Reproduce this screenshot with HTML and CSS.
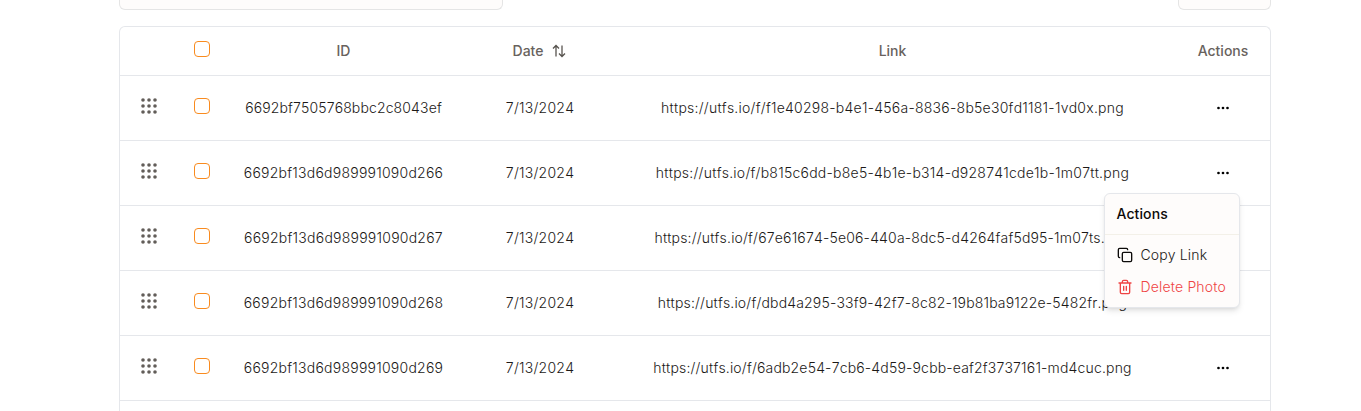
FILE: index.html
```html
<!DOCTYPE html>
<html lang="en">
<head>
<meta charset="utf-8">
<title>Photos</title>
<link rel="stylesheet" href="styles.css">
</head>
<body>
<svg class="sprite" width="0" height="0">
  <symbol id="grip" viewBox="0 0 20 20"><g fill="currentColor"><circle cx="4" cy="4" r="1.8"/><circle cx="10" cy="4" r="1.8"/><circle cx="16" cy="4" r="1.8"/><circle cx="4" cy="10" r="1.8"/><circle cx="10" cy="10" r="1.8"/><circle cx="16" cy="10" r="1.8"/><circle cx="4" cy="16" r="1.8"/><circle cx="10" cy="16" r="1.8"/><circle cx="16" cy="16" r="1.8"/></g></symbol>
  <symbol id="dots" viewBox="0 0 16 16"><g fill="currentColor"><circle cx="3.5" cy="8" r="1.35"/><circle cx="8" cy="8" r="1.35"/><circle cx="12.5" cy="8" r="1.35"/></g></symbol>
</svg>
<main class="page">
  <div class="toolbar"><div class="search"></div><div class="view"></div></div>
  <section class="table">
    <div class="row head"><span></span><i class="check"></i><span>ID</span><span class="sort">Date <svg width="16" height="16" viewBox="0 0 16 16"><path d="M5 13.5V2.5M2 5.5l3-3 3 3M11 2.5v11M8 10.5l3 3 3-3"/></svg></span><span>Link</span><span class="act">Actions</span></div>
    <div class="row"><svg class="grip"><use href="#grip"/></svg><i class="check"></i><span class="snug">6692bf7505768bbc2c8043ef</span><span class="wide">7/13/2024</span><span class="wide">https://utfs.io/f/f1e40298-b4e1-456a-8836-8b5e30fd1181-1vd0x.png</span><span class="act"><svg class="dots"><use href="#dots"/></svg></span></div>
    <div class="row"><svg class="grip"><use href="#grip"/></svg><i class="check"></i><span class="wide">6692bf13d6d989991090d266</span><span class="wide">7/13/2024</span><span class="wide">https://utfs.io/f/b815c6dd-b8e5-4b1e-b314-d928741cde1b-1m07tt.png</span><span class="act"><svg class="dots"><use href="#dots"/></svg>
      <div class="menu">
        <div class="title">Actions</div>
        <div class="item"><svg width="16" height="16" viewBox="0 0 24 24"><rect x="8" y="8" width="14" height="14" rx="2"/><path d="M4 16c-1.1 0-2-.9-2-2V4c0-1.1.9-2 2-2h10c1.1 0 2 .9 2 2"/></svg>Copy Link</div>
        <div class="item danger"><svg width="16" height="16" viewBox="0 0 24 24"><path d="M3 6h18M19 6v14c0 1-1 2-2 2H7c-1 0-2-1-2-2V6M8 6V4c0-1 1-2 2-2h4c1 0 2 1 2 2v2M10 11v6M14 11v6"/></svg>Delete Photo</div>
      </div></span></div>
    <div class="row"><svg class="grip"><use href="#grip"/></svg><i class="check"></i><span class="wide">6692bf13d6d989991090d267</span><span class="wide">7/13/2024</span><span>https://utfs.io/f/67e61674-5e06-440a-8dc5-d4264faf5d95-1m07ts.png</span><span class="act"><svg class="dots"><use href="#dots"/></svg></span></div>
    <div class="row"><svg class="grip"><use href="#grip"/></svg><i class="check"></i><span class="wide">6692bf13d6d989991090d268</span><span class="wide">7/13/2024</span><span>https://utfs.io/f/dbd4a295-33f9-42f7-8c82-19b81ba9122e-5482fr.png</span><span class="act"><svg class="dots"><use href="#dots"/></svg></span></div>
    <div class="row"><svg class="grip"><use href="#grip"/></svg><i class="check"></i><span class="wide">6692bf13d6d989991090d269</span><span class="wide">7/13/2024</span><span>https://utfs.io/f/6adb2e54-7cb6-4d59-9cbb-eaf2f3737161-md4cuc.png</span><span class="act"><svg class="dots"><use href="#dots"/></svg></span></div>
  </section>
</main>
</body>
</html>
```
FILE: styles.css
```css
* { box-sizing: border-box; }
body { margin: 0; background: #fff; color: #1c1917; font: 350 14px/20px Inter, sans-serif; font-kerning: none; letter-spacing: 0.175px; }
.sprite { position: absolute; }
.page { width: 1152px; height: 411px; margin-left: 119px; display: flex; flex-direction: column; }
.toolbar { display: flex; justify-content: space-between; height: 10px; margin-bottom: 16px; }
.search, .view { border: 1px solid #e5e5e5; border-top: 0; border-radius: 0 0 6px 6px; background: #fefcfb; }
.search { width: 384px; }
.view { width: 93px; }
.table { flex: 1; border: 1px solid #e5e7eb; border-bottom: 0; border-radius: 6px 6px 0 0; }
.row { display: grid; grid-template-columns: 58px 48px 235px 158px 547px 104px; align-items: center; justify-items: center; height: 65px; border-bottom: 1px solid #e5e7eb; white-space: nowrap; }
.head { height: 49px; color: #68625d; font-weight: 450; font-kerning: normal; letter-spacing: 0; }
.snug { letter-spacing: 0.13px; }
.wide { letter-spacing: 0.24px; }
.check { width: 16px; height: 16px; border: 1px solid #f98b1f; border-radius: 4px; position: relative; top: -2px; }
.grip { width: 20px; height: 20px; color: #625d59; position: relative; top: -2px; }
.sort { display: flex; align-items: center; gap: 8px; }
.sort svg { fill: none; stroke: #57534e; stroke-width: 1.3; }
.act { position: relative; padding-left: 9px; }
.head .act { padding-left: 10px; }
.dots { display: block; width: 16px; height: 16px; color: #000; }
.menu { position: absolute; z-index: 2; top: 28px; right: -9px; width: 136px; height: 115px; padding: 4px; border: 1px solid #e5e7eb; border-radius: 6px; background: #fefcfb; box-shadow: 0 4px 6px -1px #0000001a, 0 2px 4px -2px #0000001a; font-kerning: normal; }
.title { margin: -4px -4px 4px; height: 41px; padding: 10px 12px; border-bottom: 1px solid #f3f0e8; color: #0c0a09; font-weight: 550; letter-spacing: 0.1px; }
.item { display: flex; align-items: center; gap: 8px; height: 32px; padding-left: 8px; }
.item svg { fill: none; stroke: #0c0a09; stroke-width: 2; stroke-linecap: round; stroke-linejoin: round; }
.danger { color: #ef4444; }
.item.danger svg { stroke: #ef4444; }
```
